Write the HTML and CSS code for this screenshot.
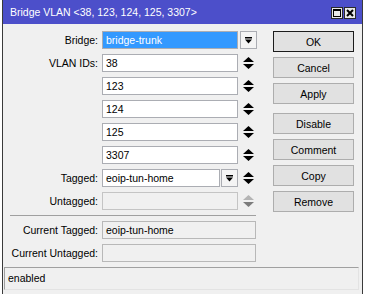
FILE: index.html
```html
<!DOCTYPE html>
<html lang="en">

<head>
    <meta charset="UTF-8">
    <title>Bridge VLAN</title>
    <link rel="stylesheet" href="styles.css">
</head>

<body>
    <div class="window">
        <div class="titlebar">
            <span class="title">Bridge VLAN &lt;38, 123, 124, 125, 3307&gt;</span>
            <div class="tb-buttons">
                <span class="tb-btn">
                    <svg width="8" height="8" viewBox="0 0 8 8"><rect x="0.5" y="0.5" width="7" height="7" fill="none" stroke="#000"/><rect x="0" y="0" width="8" height="2" fill="#000"/></svg>
                </span>
                <span class="tb-btn">
                    <svg width="8" height="8" viewBox="0 0 8 8"><path d="M1 1 L7 7 M7 1 L1 7" stroke="#000" stroke-width="2"/></svg>
                </span>
            </div>
        </div>

        <div class="content">
            <div class="form">
                <div class="row">
                    <label class="label">Bridge:</label>
                    <div class="field wide selected">bridge-trunk</div>
                    <span class="drop drop-gap">
                        <svg width="7" height="7" viewBox="0 0 7 7"><rect x="0" y="0" width="7" height="1.5" fill="#000"/><path d="M0 2.5 L7 2.5 L3.5 6.5 Z" fill="#000"/></svg>
                    </span>
                </div>
                <div class="row">
                    <label class="label">VLAN IDs:</label>
                    <div class="field wide">38</div>
                    <span class="spin">
                        <svg width="11" height="12" viewBox="0 0 11 12"><path d="M5.5 0 L11 5 L0 5 Z M0 7 L11 7 L5.5 12 Z" fill="#000"/></svg>
                    </span>
                </div>
                <div class="row">
                    <label class="label"></label>
                    <div class="field wide">123</div>
                    <span class="spin">
                        <svg width="11" height="12" viewBox="0 0 11 12"><path d="M5.5 0 L11 5 L0 5 Z M0 7 L11 7 L5.5 12 Z" fill="#000"/></svg>
                    </span>
                </div>
                <div class="row">
                    <label class="label"></label>
                    <div class="field wide">124</div>
                    <span class="spin">
                        <svg width="11" height="12" viewBox="0 0 11 12"><path d="M5.5 0 L11 5 L0 5 Z M0 7 L11 7 L5.5 12 Z" fill="#000"/></svg>
                    </span>
                </div>
                <div class="row">
                    <label class="label"></label>
                    <div class="field wide">125</div>
                    <span class="spin">
                        <svg width="11" height="12" viewBox="0 0 11 12"><path d="M5.5 0 L11 5 L0 5 Z M0 7 L11 7 L5.5 12 Z" fill="#000"/></svg>
                    </span>
                </div>
                <div class="row">
                    <label class="label"></label>
                    <div class="field wide">3307</div>
                    <span class="spin">
                        <svg width="11" height="12" viewBox="0 0 11 12"><path d="M5.5 0 L11 5 L0 5 Z M0 7 L11 7 L5.5 12 Z" fill="#000"/></svg>
                    </span>
                </div>
                <div class="row">
                    <label class="label">Tagged:</label>
                    <div class="field short">eoip-tun-home</div>
                    <span class="drop">
                        <svg width="7" height="7" viewBox="0 0 7 7"><rect x="0" y="0" width="7" height="1.5" fill="#000"/><path d="M0 2.5 L7 2.5 L3.5 6.5 Z" fill="#000"/></svg>
                    </span>
                    <span class="spin">
                        <svg width="11" height="12" viewBox="0 0 11 12"><path d="M5.5 0 L11 5 L0 5 Z M0 7 L11 7 L5.5 12 Z" fill="#000"/></svg>
                    </span>
                </div>
                <div class="row">
                    <label class="label">Untagged:</label>
                    <div class="field wide disabled"></div>
                    <span class="spin">
                        <svg width="11" height="12" viewBox="0 0 11 12"><path d="M5.5 0 L11 5 L0 5 Z" fill="#b4b4b4"/><path d="M0 7 L11 7 L5.5 12 Z" fill="#7c7c7c"/></svg>
                    </span>
                </div>

                <div class="sep"></div>

                <div class="row">
                    <label class="label">Current Tagged:</label>
                    <div class="field full readonly">eoip-tun-home</div>
                </div>
                <div class="row">
                    <label class="label">Current Untagged:</label>
                    <div class="field full readonly"></div>
                </div>
            </div>

            <div class="buttons">
                <button class="btn default">OK</button>
                <button class="btn">Cancel</button>
                <button class="btn">Apply</button>
                <button class="btn group">Disable</button>
                <button class="btn">Comment</button>
                <button class="btn">Copy</button>
                <button class="btn">Remove</button>
            </div>
        </div>

        <div class="status">enabled</div>
    </div>
</body>

</html>
```

FILE: styles.css
```css
* {
    padding: 0;
    margin: 0;
    box-sizing: border-box;
}

html,
body {
    height: 100%;
    background-color: #ffffff;
    overflow: hidden;
    font-family: "Liberation Sans", Arial, sans-serif;
    font-size: 10.5px;
    color: #000;
}

.window {
    width: 361px;
    height: 294px;
    margin-left: 2px;
    border-left: 1px solid #3a3a3a;
    border-right: 1px solid #3a3a3a;
    background-color: #f0f0f0;
}

/* title */
.titlebar {
    height: 24px;
    background-color: #4c4fca;
    display: flex;
    align-items: center;
    padding-left: 7px;
    padding-right: 6px;
}

.title {
    color: #fff;
    font-size: 10.5px;
    flex: 1;
}

.tb-buttons {
    display: flex;
    gap: 1px;
    margin-top: 2px;
}

.tb-btn {
    width: 12px;
    height: 12px;
    border: 1px solid #2a2a2a;
    background-color: #e8e8e8;
    display: flex;
    align-items: center;
    justify-content: center;
}

/* body */
.content {
    display: flex;
    padding-top: 7px;
}

.form {
    width: 254px;
}

.row {
    display: flex;
    align-items: center;
    height: 18px;
    margin-bottom: 5px;
}

.label {
    width: 95px;
    margin-right: 4px;
    text-align: right;
    white-space: nowrap;
}

.field {
    height: 18px;
    border: 1px solid #abadb3;
    background-color: #fff;
    padding-left: 3px;
    line-height: 16px;
    white-space: nowrap;
}

.field.wide {
    width: 136px;
}

.field.short {
    width: 118px;
}

.field.full {
    width: 154px;
}

.field.selected {
    background-color: #3399ff;
    color: #fff;
}

.field.disabled {
    background-color: #f0f0f0;
    border-color: #c4c4c4;
}

.field.readonly {
    background-color: #f0f0f0;
    border-color: #b8b8b8;
}

.drop {
    width: 17px;
    height: 18px;
    margin-left: 1px;
    border: 1px solid #abadb3;
    background-color: #f4f4f4;
    display: flex;
    align-items: center;
    justify-content: center;
}

.drop.drop-gap {
    margin-left: 2px;
}

.spin {
    width: 17px;
    display: flex;
    justify-content: center;
    margin-left: 2px;
}

.sep {
    height: 1px;
    width: 246px;
    margin: 1px 0 5px 7px;
    background-color: #a0a0a0;
}

/* buttons */
.buttons {
    margin-left: 16px;
    display: flex;
    flex-direction: column;
    gap: 5px;
}

.btn {
    width: 81px;
    height: 21px;
    border: 1px solid #adadad;
    background-color: #e1e1e1;
    font-family: "Liberation Sans", Arial, sans-serif;
    font-size: 10.5px;
    color: #000;
}

.btn.default {
    border-color: #1c1c1c;
}

.btn.group {
    margin-top: 4px;
}

/* status */
.status {
    width: 355px;
    height: 23px;
    margin-left: 1px;
    border: 1px solid #a0a0a0;
    border-right-color: #e3e3e3;
    border-bottom-color: #e3e3e3;
    padding-left: 3px;
    line-height: 21px;
}
```
